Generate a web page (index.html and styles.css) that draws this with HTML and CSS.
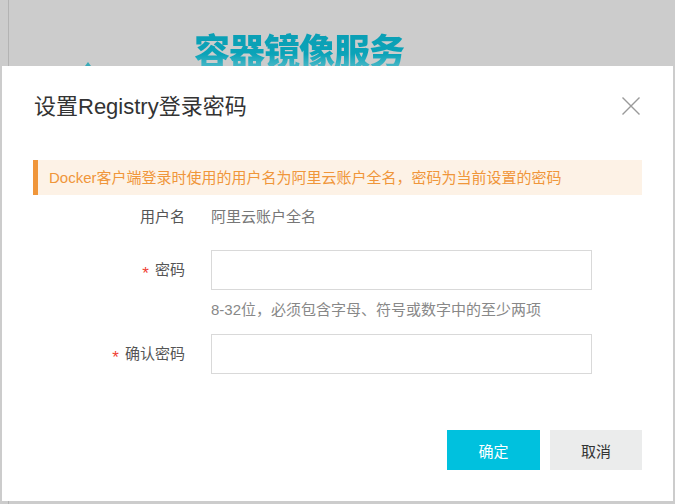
FILE: index.html
```html
<!DOCTYPE html>
<html lang="zh-CN">
<head>
<meta charset="utf-8">
<title>设置Registry登录密码</title>
<link rel="stylesheet" href="styles.css">
</head>
<body>
<div class="page">
  <div class="bg">
    <h1 class="brand">容器镜像服务</h1>
    <span class="brand-mark"></span>
  </div>

  <div class="modal">
    <div class="modal-header">
      <h2 class="modal-title">设置Registry登录密码</h2>
      <button class="close" aria-label="关闭">
        <svg width="20" height="20" viewBox="0 0 20 20"><path d="M1.5 1.5 L18.5 18.5 M18.5 1.5 L1.5 18.5" stroke="#9a9a9a" stroke-width="1.4" fill="none"/></svg>
      </button>
    </div>

    <div class="modal-body">
      <div class="notice">Docker客户端登录时使用的用户名为阿里云账户全名，密码为当前设置的密码</div>

      <div class="form">
        <div class="row">
          <label class="label">用户名</label>
          <div class="value">阿里云账户全名</div>
        </div>
        <div class="row row-input">
          <label class="label"><span class="req">*</span>密码</label>
          <input class="input" type="password">
        </div>
        <div class="hint">8-32位，必须包含字母、符号或数字中的至少两项</div>
        <div class="row row-input row-confirm">
          <label class="label"><span class="req">*</span>确认密码</label>
          <input class="input" type="password">
        </div>
      </div>
    </div>

    <div class="modal-footer">
      <button class="btn btn-primary">确定</button>
      <button class="btn btn-default">取消</button>
    </div>
  </div>
</div>
</body>
</html>
```

FILE: styles.css
```css
* { box-sizing: border-box; }

html, body {
  margin: 0;
  padding: 0;
  background: #cccccc;
  font-family: "Liberation Sans", "Noto Sans CJK SC", sans-serif;
  overflow: hidden;
}

.page {
  position: relative;
  width: 675px;
  height: 504px;
}

.bg {
  margin-left: 8px;
  height: 504px;
  border-left: 1px solid #b3b3b3;
  padding-top: 24px;
  padding-left: 185px;
}

.brand {
  margin: 0;
  font-family: "Noto Sans CJK SC", sans-serif;
  font-weight: 900;
  font-size: 36px;
  line-height: 50px;
  letter-spacing: -1px;
  background: linear-gradient(180deg, #0b9db3 0%, #0aa3b8 60%, #6cc3cf 100%);
  -webkit-background-clip: text;
  background-clip: text;
  color: transparent;
  display: inline-block;
}

.brand-mark {
  position: absolute;
  left: 85px;
  top: 62px;
  width: 0;
  height: 0;
  border-left: 3px solid transparent;
  border-right: 3px solid transparent;
  border-bottom: 4px solid #3aaab8;
}

.modal {
  position: absolute;
  left: 2px;
  top: 66px;
  width: 671px;
  height: 435px;
  background: #ffffff;
  display: flex;
  flex-direction: column;
}

.modal-header {
  display: flex;
  align-items: center;
  justify-content: space-between;
  padding: 26px 32px 0 32px;
}

.modal-title {
  margin: 0;
  font-weight: 400;
  font-size: 22px;
  line-height: 30px;
  color: #333333;
}

.close {
  border: 0;
  background: none;
  padding: 0;
  width: 20px;
  height: 20px;
  display: block;
  margin-top: -2px;
}
.close svg { display: block; }

.modal-body {
  padding: 0 31px;
}

.notice {
  margin-top: 38px;
  height: 35px;
  line-height: 35px;
  border-left: 5px solid #f0963a;
  background: #fdf2e6;
  color: #f0963a;
  font-size: 15px;
  padding-left: 11px;
  white-space: nowrap;
}

.form {
  display: flex;
  flex-direction: column;
}

.row {
  display: grid;
  grid-template-columns: 152px 381px;
  column-gap: 26px;
  align-items: center;
  height: 40px;
  font-size: 15px;
}

.row-input { margin-top: 15px; }
.row-confirm { margin-top: 14px; }

.label {
  text-align: right;
  color: #555555;
}

.req {
  color: #f04134;
  margin-right: 6px;
  font-size: 17px;
  vertical-align: -4px;
  line-height: 1;
}

.value {
  color: #777777;
}

.input {
  width: 381px;
  height: 40px;
  border: 1px solid #d9d9d9;
  background: #fff;
  margin: 0;
  padding: 0 10px;
  outline: none;
}

.hint {
  margin-top: 10px;
  margin-left: 178px;
  font-size: 15px;
  line-height: 20px;
  color: #888888;
}

.modal-footer {
  margin-top: 56px;
  padding: 0 31px;
  display: flex;
  justify-content: flex-end;
  gap: 10px;
}

.btn {
  height: 40px;
  border: 0;
  font-family: "Liberation Sans", "Noto Sans CJK SC", sans-serif;
  font-size: 15px;
  padding: 0;
  cursor: pointer;
}

.btn-primary {
  width: 93px;
  background: #00c1de;
  color: #ffffff;
}

.btn-default {
  width: 92px;
  background: #ebecec;
  color: #333333;
}
```
